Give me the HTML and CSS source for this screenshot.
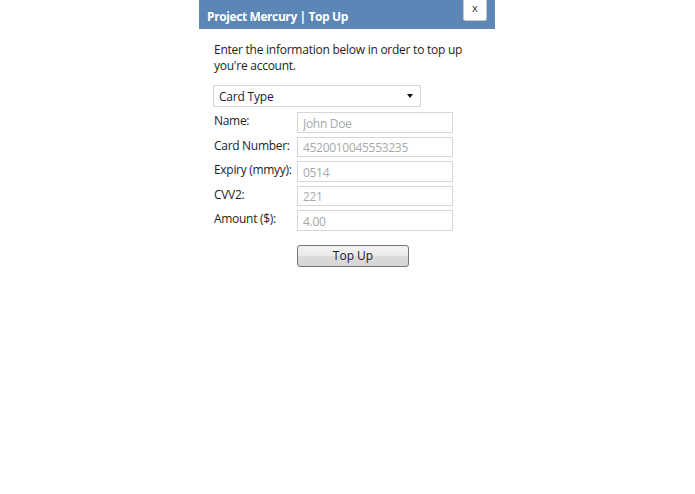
FILE: index.html
```html
<!DOCTYPE html>
<html lang="en">
<head>
  <meta charset="UTF-8" />
  <title>Project Mercury | Top Up</title>
  <link rel="stylesheet" href="styles.css">
</head>
<body>

<div class="panel">
  <div class="titlebar">
    <span class="title">Project Mercury | Top Up</span>
    <button class="close">x</button>
  </div>

  <div class="content">
    <p class="intro">Enter the information below in order to top up you're account.</p>

    <div class="select">
      <span>Card Type</span>
      <span class="arrow"></span>
    </div>

    <div class="form">
      <label>Name:</label>
      <input type="text" placeholder="John Doe">
      <label>Card Number:</label>
      <input type="text" placeholder="4520010045553235">
      <label>Expiry (mmyy):</label>
      <input type="text" placeholder="0514">
      <label>CVV2:</label>
      <input type="text" placeholder="221">
      <label>Amount ($):</label>
      <input type="text" placeholder="4.00">
    </div>

    <div class="actions">
      <button class="topup">Top Up</button>
    </div>
  </div>
</div>

</body>
</html>
```

FILE: styles.css
```css
body {
  margin: 0;
  background: #fff;
  font-family: "Open Sans", "Noto Sans", sans-serif;
  font-size: 12px;
  color: #1e1e1e;
}

.panel {
  width: 296px;
  margin-left: 199px;
}

.titlebar {
  position: relative;
  height: 29px;
  box-sizing: border-box;
  padding: 3px 0 0 8px;
  background: #5b86b6;
  display: flex;
  align-items: center;
}

.title {
  color: #fff;
  font-weight: bold;
  font-size: 12px;
  letter-spacing: -0.4px;
}

.close {
  position: absolute;
  right: 8px;
  top: 0;
  width: 24px;
  height: 21px;
  padding: 0 0 4px;
  background: #fff;
  border: 1px solid #c9c9c9;
  border-top: none;
  border-radius: 0 0 3px 3px;
  font-family: inherit;
  font-size: 11px;
  color: #333;
  line-height: 14px;
}

.content {
  padding: 13px 0 0 15px;
}

.intro {
  margin: 0 0 11px;
  width: 265px;
  line-height: 16px;
  letter-spacing: -0.25px;
}

.select {
  width: 206px;
  height: 20px;
  margin-left: -1px;
  border: 1px solid #d4d4d4;
  display: flex;
  align-items: center;
  justify-content: space-between;
}

.select span:first-child {
  padding-left: 5px;
  letter-spacing: -0.2px;
}

.arrow {
  width: 0;
  height: 0;
  border-left: 3.5px solid transparent;
  border-right: 3.5px solid transparent;
  border-top: 4px solid #111;
  margin-right: 7px;
}

.form {
  display: grid;
  grid-template-columns: 83px 156px;
  row-gap: 4px;
  margin-top: 5px;
  align-items: start;
}

.form label {
  letter-spacing: -0.3px;
  line-height: 16px;
  padding-top: 1px;
}

.form input {
  box-sizing: border-box;
  width: 156px;
  height: 20.5px;
  margin: 0;
  border: 1px solid #d6d6d6;
  padding: 2px 5px 0;
  font-family: inherit;
  font-size: 12px;
  letter-spacing: -0.3px;
}

.form input::placeholder {
  color: #a8a8a8;
}

.actions {
  padding: 14px 0 0 83px;
}

.topup {
  width: 112px;
  height: 22px;
  border: 1px solid #767676;
  border-radius: 3px;
  background: linear-gradient(#f3f3f3, #e9e9e9 50%, #dcdcdc 51%, #d4d4d4);
  font-family: inherit;
  font-size: 12px;
  color: #1e1e1e;
  padding: 0;
}
```
